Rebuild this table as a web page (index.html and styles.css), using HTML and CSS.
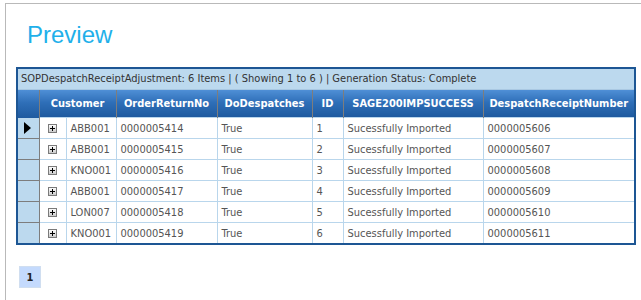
FILE: index.html
```html
<!DOCTYPE html>
<html lang="en">
<head>
    <meta charset="UTF-8">
    <title>Preview</title>
    <link rel="stylesheet" href="styles.css">
</head>
<body>
    <div class="frame">
        <h1 class="titulo">Preview</h1>

        <div class="grid">
            <div class="grid-caption">SOPDespatchReceiptAdjustment: 6 Items | ( Showing 1 to 6 ) | Generation Status: Complete</div>
            <table>
                <colgroup>
                    <col class="c-sel">
                    <col class="c-exp">
                    <col class="c-cust">
                    <col class="c-order">
                    <col class="c-desp">
                    <col class="c-id">
                    <col class="c-sage">
                    <col class="c-num">
                </colgroup>
                <thead>
                    <tr>
                        <th class="sel"></th>
                        <th colspan="2">Customer</th>
                        <th>OrderReturnNo</th>
                        <th>DoDespatches</th>
                        <th>ID</th>
                        <th>SAGE200IMPSUCCESS</th>
                        <th>DespatchReceiptNumber</th>
                    </tr>
                </thead>
                <tbody id="linhas"></tbody>
            </table>
        </div>

        <div class="pager">
            <span class="pagina">1</span>
        </div>
    </div>

    <script>
        const linhas = [
            ['ABB001', '0000005414', 'True', 1, 'Sucessfully Imported', '0000005606'],
            ['ABB001', '0000005415', 'True', 2, 'Sucessfully Imported', '0000005607'],
            ['KNO001', '0000005416', 'True', 3, 'Sucessfully Imported', '0000005608'],
            ['ABB001', '0000005417', 'True', 4, 'Sucessfully Imported', '0000005609'],
            ['LON007', '0000005418', 'True', 5, 'Sucessfully Imported', '0000005610'],
            ['KNO001', '0000005419', 'True', 6, 'Sucessfully Imported', '0000005611']
        ];

        const expandir = '<svg class="expandir" width="9" height="9" viewBox="0 0 9 9">' +
            '<rect x="0.5" y="0.5" width="8" height="8" fill="url(#g)" stroke="#7a7a7a"/>' +
            '<path d="M2 4.5h5M4.5 2v5" stroke="#000" stroke-width="1"/></svg>';

        let html = '';
        linhas.forEach((l, i) => {
            const marca = i === 0 ? '<span class="atual"></span>' : '';
            html += `<tr>
                <td class="sel">${marca}</td>
                <td class="exp">${expandir}</td>
                <td>${l[0]}</td>
                <td>${l[1]}</td>
                <td>${l[2]}</td>
                <td>${l[3]}</td>
                <td>${l[4]}</td>
                <td>${l[5]}</td>
            </tr>`;
        });
        document.getElementById('linhas').innerHTML = html;
    </script>
    <svg width="0" height="0" class="defs">
        <defs>
            <linearGradient id="g" x1="0" y1="0" x2="0" y2="1">
                <stop offset="0" stop-color="#ffffff"/>
                <stop offset="1" stop-color="#c8c8c8"/>
            </linearGradient>
        </defs>
    </svg>
</body>
</html>
```

FILE: styles.css
```css
body {
    margin: 0;
    font-family: "DejaVu Sans Condensed", "DejaVu Sans", Tahoma, sans-serif;
    font-size: 11px;
    background: #fff;
    overflow: hidden;
}
.frame {
    margin: 3px 0 0 5px;
    border-top: 1px solid #b9b9b9;
    border-left: 1px solid #b9b9b9;
    height: 300px;
    padding: 0 0 0 10px;
}
.titulo {
    margin: 0;
    padding: 17px 0 0 11px;
    height: 63px;
    box-sizing: border-box;
    font-family: "Liberation Sans", Arial, sans-serif;
    font-size: 24px;
    font-weight: normal;
    color: #1fb0ea;
    line-height: 28px;
}
.grid {
    width: 616px;
    border: 2px solid #1d5694;
}
.grid-caption {
    height: 20px;
    line-height: 20px;
    background: #bcd9ee;
    color: #333;
    padding-left: 3px;
    border-bottom: 1px solid #a9c8e2;
    white-space: nowrap;
}
table {
    width: 616px;
    table-layout: fixed;
    border-collapse: collapse;
}
.c-sel { width: 21px; }
.c-exp { width: 27px; }
.c-cust { width: 50px; }
.c-order { width: 101px; }
.c-desp { width: 95px; }
.c-id { width: 31px; }
.c-sage { width: 140px; }
.c-num { width: 151px; }
th {
    height: 27px;
    padding: 0;
    color: #fff;
    font-weight: bold;
    text-align: center;
    background: linear-gradient(#4f8fd6, #2f6fb8 45%, #1e5a9f);
    border-left: 1px solid #7d7d7d;
    white-space: nowrap;
}
th:first-child {
    border-left: none;
}
td {
    height: 20px;
    padding: 0 0 0 4px;
    color: #555;
    border: 1px solid #b9d6ec;
    white-space: nowrap;
    overflow: hidden;
}
td.sel {
    background: #bcd9ee;
    border: none;
    border-right: 1px solid #7d7d7d;
    border-bottom: 1px solid #7d7d7d;
    padding: 0;
    position: relative;
}
tr:last-child td {
    border-bottom: none;
}
td:last-child {
    border-right: none;
}
td.exp {
    padding: 0 0 0 8px;
}
.expandir {
    display: block;
}
.atual {
    position: absolute;
    left: 6px;
    top: 4px;
    width: 0;
    height: 0;
    border-left: 7px solid #000;
    border-top: 6px solid transparent;
    border-bottom: 6px solid transparent;
}
.pager {
    padding: 21px 0 0 3px;
}
.pagina {
    display: inline-block;
    width: 22px;
    height: 22px;
    line-height: 22px;
    text-align: center;
    box-sizing: border-box;
    background: #c4dafd;
    border: 1px solid #d0def0;
    font-weight: bold;
    color: #222;
}
.defs {
    position: absolute;
}
```
